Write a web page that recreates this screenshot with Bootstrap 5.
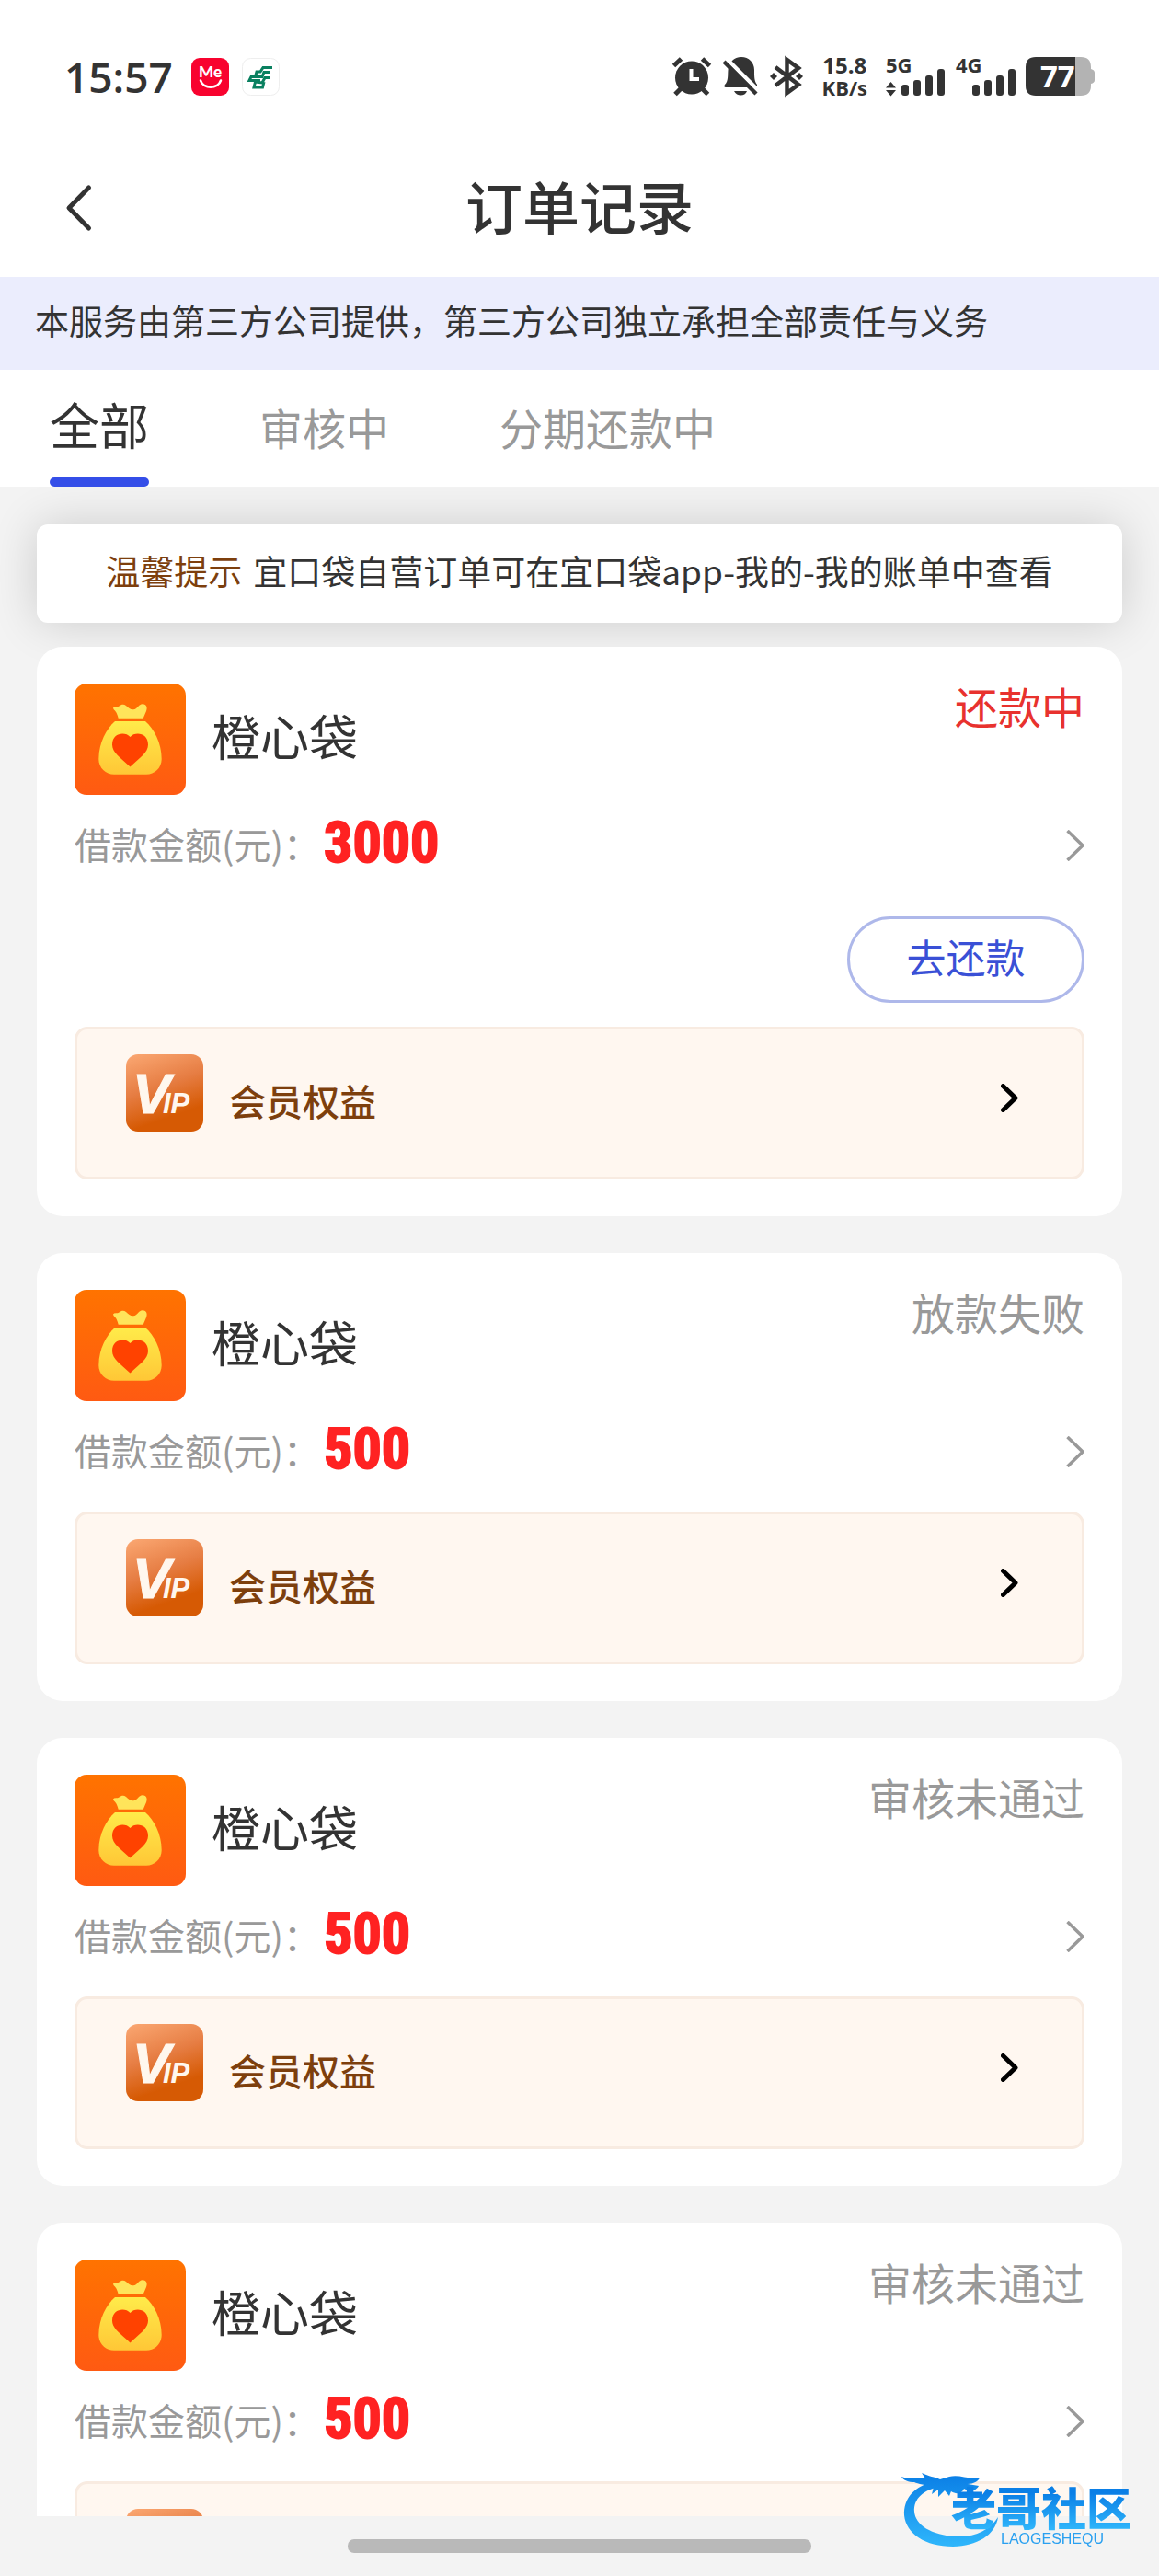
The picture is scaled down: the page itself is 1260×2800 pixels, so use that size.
<!DOCTYPE html>
<html lang="zh-CN">
<head>
<meta charset="utf-8">
<meta name="viewport" content="width=device-width, initial-scale=1">
<title>订单记录</title>
<link href="https://cdn.jsdelivr.net/npm/bootstrap@5.3.0/dist/css/bootstrap.min.css" rel="stylesheet">
<style>
  body { font-family: "Noto Sans CJK SC", sans-serif; background: #f3f3f3; color: #333; height: 100vh; overflow: hidden; }
  a { color: inherit; text-decoration: none; }
  svg { display: block; flex: none; overflow: visible; }
  .status-bar { height: 150px; padding: 16px 70px 0 70px; font-family: "Open Sans", sans-serif; }
  .clock { font-size: 46px; font-weight: 600; line-height: 48px; margin-right: 20px; }
  .app-icons { gap: 14px; }
  .net-speed { font-weight: 700; line-height: 24px; font-size: 24px; margin: 0 20px 0 21px; }
  .net-speed .unit { font-size: 22px; }
  .title-bar { height: 151px; padding: 0 68px; }
  .title-bar h1 { font-size: 62px; font-weight: 500; line-height: 72px; padding-bottom: 6px; }
  .side { width: 36px; }
  .notice { background: #ebedfd; height: 101px; padding: 0 38px; font-size: 37px; line-height: 94px; }
  .tabs { height: 127px; padding: 0 54px; gap: 120px; }
  .tab-item { border: 0; background: none; padding: 0 0 4px; color: #999; font-size: 47px; line-height: 118px; }
  .tab-item.active { color: #333; font-size: 54px; line-height: 117px; padding: 0; border-bottom: 10px solid transparent; position: relative; }
  .tab-item.active::after { content: ""; position: absolute; left: 0; right: 0; top: 117px; height: 10px; border-radius: 5px; background: #344ee8; }
  .scroll-area { padding: 41px 40px 0; overflow: hidden; min-height: 0; }
  .tip { border-radius: 12px; background: #fff; height: 107px; line-height: 101px; font-size: 37px; gap: 12px; margin-bottom: 26px; box-shadow: 0 0 50px rgba(0,0,0,.16); }
  .tip strong { font-weight: 400; color: #7d3f0d; }
  .order { background: #fff; border-radius: 28px; padding: 40px 41px; margin-bottom: 40px; position: relative; }
  .order-head { height: 121px; gap: 28px; }
  .order-head h2 { font-size: 53px; font-weight: 400; line-height: 113px; }
  .state { font-size: 47px; line-height: 48px; color: #999; }
  .state.due { color: #e8322e; }
  .amount { height: 110px; font-size: 40px; color: #999; }
  .amount .sum { font-family: "Roboto Condensed", "Liberation Sans Narrow", "Liberation Sans", sans-serif; font-weight: 700; font-size: 62px; line-height: 104px; height: 110px; color: #ff2222; -webkit-text-stroke: 2px #ff2222; margin-left: 4px; }
  .amount .label { line-height: 106px; height: 110px; }
  .actions { padding: 22px 0 16px; }
  .repay { width: 258px; height: 94px; border: 3px solid #aeb8ea; border-radius: 47px; background: #fff; color: #3a50d6; font-size: 43px; line-height: 80px; padding: 0 0 8px; }
  .vip { margin-top: 10px; height: 166px; border: 3px solid #f8ebe1; border-radius: 14px; background: #fff7f0; padding: 27px 69px 0 53px; color: #7d3f0d; }
  .vip span { font-size: 40px; font-weight: 500; line-height: 100px; margin-left: 28px; }
  .vip .go { margin-top: 32px; }
  .home-zone { height: 65px; flex: none; }
  .home-pill { width: 40%; height: 15px; border-radius: 7px; background: #b9b9b9; }
  .brand { position: fixed; right: 0; bottom: 20px; }
</style>
</head>
<body class="d-flex flex-column">

<svg width="0" height="0" class="position-absolute" aria-hidden="true">
  <defs>
    <linearGradient id="gOrange" x1="0" y1="0" x2="0" y2="1"><stop offset="0" stop-color="#ff7300"/><stop offset="1" stop-color="#ff5a12"/></linearGradient>
    <linearGradient id="gYellow" x1="0" y1="0" x2="0" y2="1"><stop offset="0" stop-color="#ffeb4a"/><stop offset="1" stop-color="#ffc736"/></linearGradient>
    <linearGradient id="gVip" x1="0" y1="0" x2=".35" y2="1"><stop offset="0" stop-color="#fba873"/><stop offset=".5" stop-color="#e67d43"/><stop offset=".9" stop-color="#d65a04"/></linearGradient>
    <linearGradient id="gBlue" gradientUnits="userSpaceOnUse" x1="0" y1="20" x2="0" y2="98"><stop offset="0" stop-color="#0b7fe6"/><stop offset="1" stop-color="#2fb6fb"/></linearGradient>
    <linearGradient id="gBlueText" gradientUnits="userSpaceOnUse" x1="0" y1="40" x2="0" y2="80"><stop offset="0" stop-color="#0b7fe6"/><stop offset="1" stop-color="#2fb6fb"/></linearGradient>
    <symbol id="bag" viewBox="0 0 121 121">
      <rect width="121" height="121" rx="13" fill="url(#gOrange)"/>
      <path d="M42 26.500C43.500 24.500 46 26 48.500 24.500C51 22.500 53.500 22 56 24C59 26.500 60.500 28.500 64 28.300C68.500 28 69.500 22.300 74 22.300C78.500 22.300 79.500 26.500 78 30L74.700 37.700H47.700C46.500 33 45 30 42.500 28Z" fill="#ffe45a"/>
      <path d="M44 41H77C86 49 94.700 64 94.700 82C94.700 92 87 98.700 78 98.700H43C34 98.700 26.300 92 26.300 82C26.300 64 35 49 44 41Z" fill="url(#gYellow)"/>
      <path d="M60.500 58C55 52 41 53.500 41 66.500C41 75 50 80.500 60.500 90.500C71 80.500 80 75 80 66.500C80 53.500 66 52 60.500 58Z" fill="#ff4200"/>
    </symbol>
    <symbol id="vipmark" viewBox="0 0 84 84">
      <rect width="84" height="84" rx="13" fill="url(#gVip)"/>
      <g fill="#fff7ee" font-family="Liberation Sans, sans-serif" font-weight="700" font-style="italic">
        <text x="7" y="64" font-size="62" stroke="#fff7ee" stroke-width="1">V</text>
        <text x="40" y="64" font-size="31">IP</text>
      </g>
    </symbol>
    <symbol id="arrow" viewBox="0 0 20 34"><path d="M1.500 1L18 17L1.500 33" fill="none" stroke="#999" stroke-width="3.500"/></symbol>
    <symbol id="arrowBold" viewBox="0 0 19 31"><path d="M2.500 2.500L16 15.500L2.500 28.500" fill="none" stroke="#000" stroke-width="5" stroke-linecap="round" stroke-linejoin="round"/></symbol>
    <symbol id="bars" viewBox="0 0 47 29"><g fill="#333"><rect y="17" width="8" height="12" rx="3"/><rect x="13" y="12" width="8" height="17" rx="3"/><rect x="26" y="7" width="8" height="22" rx="3"/><rect x="39" width="8" height="29" rx="3"/></g></symbol>
  </defs>
</svg>

<header class="bg-white flex-shrink-0">
  <div class="status-bar d-flex align-items-center justify-content-between">
    <div class="d-flex align-items-center">
      <span class="clock">15:57</span>
      <div class="app-icons d-flex">
        <svg width="41" height="41" viewBox="0 0 41 41"><rect width="41" height="41" rx="9" fill="#f8032f"/><text x="20.500" y="21" text-anchor="middle" font-family="Lato, sans-serif" font-weight="900" font-size="17" fill="#fff">Me</text><path d="M10 24.500C13 34 29 34 32 24.500" fill="none" stroke="#fff" stroke-width="2.500" stroke-linecap="round"/></svg>
        <svg width="41" height="41" viewBox="0 0 41 41"><rect x=".5" y=".5" width="40" height="40" rx="9" fill="#fff" stroke="#eee"/><g fill="none" stroke="#0a8060" stroke-width="3"><path d="M33 10.500H23L20 15H16L14.500 20.500"/><path d="M31 15.500H24L22 20.500H10L8 24.500H20"/><path d="M30 21.500H25L22 27L14 26M24 26L22.500 32H13L14.500 26"/></g></svg>
      </div>
    </div>
    <div class="d-flex align-items-center">
      <svg class="me-2" width="47" height="42" viewBox="0 0 47 42"><g stroke="#333" stroke-width="5" fill="none"><path d="M1.500 9.500L9.500 2M32.500 2L40.500 9.500M3 40.500L9.500 34M32 34L38.500 40.500"/></g><circle cx="21" cy="22.500" r="18" fill="#333"/><path d="M20.500 13V24H29" fill="none" stroke="#fff" stroke-width="4"/></svg>
      <svg width="39" height="42" viewBox="0 0 39 42"><path d="M20 0C28 0 34 6 34 14C34 22 34 26 37 30V33H3C1 33 1 31 2 30C6 26 5 20 5.500 14C6 6 12 0 20 0ZM12 37H26C24 43 15 43 12 37Z" fill="#333"/><path d="M4 2L40 38" stroke="#fff" stroke-width="4.500"/><path d="M1 5L36 40" stroke="#333" stroke-width="4.500"/></svg>
      <svg width="36" height="42" viewBox="0 0 36 42" style="margin-left:12px"><path d="M6 11L31 30L18.500 39V3L31 12L6 31" fill="none" stroke="#333" stroke-width="4.500"/><path d="M4 17L8 21L4 25L0 21ZM32 17L36 21L32 25L28 21Z" fill="#333"/></svg>
      <div class="net-speed text-center">15.8<br><span class="unit">KB/s</span></div>
      <svg width="64" height="42" viewBox="0 0 64 42"><text x="0" y="16.500" font-size="22" font-weight="700" fill="#333">5G</text><path d="M0 33.500L5.500 27L11 33.500ZM0 36L5.500 42.500L11 36Z" fill="#333"/><use href="#bars" x="17" y="13" width="47" height="29"/></svg>
      <svg width="65" height="42" viewBox="0 0 65 42" style="margin:0 11px 0 12px"><text x="0" y="16.500" font-size="22" font-weight="700" fill="#333">4G</text><use href="#bars" x="18" y="13" width="47" height="29"/></svg>
      <svg width="75" height="42" viewBox="0 0 75 42"><path d="M53 0H60Q71 0 71 11V13Q75 14 75 17V25Q75 28 71 29V31Q71 42 60 42H53Z" fill="#b3b3b3"/><path d="M11 0H54V42H11Q0 42 0 31V11Q0 0 11 0Z" fill="#333"/><text x="16" y="33" font-size="33" font-weight="700" fill="#fff">77</text></svg>
    </div>
  </div>
  <div class="title-bar d-flex align-items-center justify-content-between">
    <a href="#" class="side" aria-label="返回"><svg width="36" height="52" viewBox="0 0 36 52"><path d="M28.500 4L7 26L28.500 48" fill="none" stroke="#333" stroke-width="5" stroke-linecap="round" stroke-linejoin="round"/></svg></a>
    <h1 class="m-0">订单记录</h1>
    <span class="side"></span>
  </div>
</header>

<div class="notice flex-shrink-0">本服务由第三方公司提供，第三方公司独立承担全部责任与义务</div>

<nav class="tabs d-flex bg-white flex-shrink-0">
  <button type="button" class="tab-item active">全部</button>
  <button type="button" class="tab-item">审核中</button>
  <button type="button" class="tab-item">分期还款中</button>
</nav>

<main class="scroll-area flex-grow-1">
  <div class="tip d-flex justify-content-center"><strong>温馨提示</strong><span>宜口袋自营订单可在宜口袋app-我的-我的账单中查看</span></div>

  <section class="order">
    <div class="order-head d-flex">
      <svg width="121" height="121"><use href="#bag"/></svg>
      <h2 class="m-0">橙心袋</h2>
      <span class="state due ms-auto">还款中</span>
    </div>
    <a href="#" class="amount d-flex align-items-center"><span class="label">借款金额(元)：</span><span class="sum">3000</span><svg class="ms-auto" width="20" height="34"><use href="#arrow"/></svg></a>
    <div class="actions d-flex justify-content-end"><button type="button" class="repay">去还款</button></div>
    <a href="#" class="vip d-flex align-items-start"><svg width="84" height="84"><use href="#vipmark"/></svg><span>会员权益</span><svg class="go ms-auto" width="19" height="31"><use href="#arrowBold"/></svg></a>
  </section>

  <section class="order">
    <div class="order-head d-flex">
      <svg width="121" height="121"><use href="#bag"/></svg>
      <h2 class="m-0">橙心袋</h2>
      <span class="state ms-auto">放款失败</span>
    </div>
    <a href="#" class="amount d-flex align-items-center"><span class="label">借款金额(元)：</span><span class="sum">500</span><svg class="ms-auto" width="20" height="34"><use href="#arrow"/></svg></a>
    <a href="#" class="vip d-flex align-items-start"><svg width="84" height="84"><use href="#vipmark"/></svg><span>会员权益</span><svg class="go ms-auto" width="19" height="31"><use href="#arrowBold"/></svg></a>
  </section>

  <section class="order">
    <div class="order-head d-flex">
      <svg width="121" height="121"><use href="#bag"/></svg>
      <h2 class="m-0">橙心袋</h2>
      <span class="state ms-auto">审核未通过</span>
    </div>
    <a href="#" class="amount d-flex align-items-center"><span class="label">借款金额(元)：</span><span class="sum">500</span><svg class="ms-auto" width="20" height="34"><use href="#arrow"/></svg></a>
    <a href="#" class="vip d-flex align-items-start"><svg width="84" height="84"><use href="#vipmark"/></svg><span>会员权益</span><svg class="go ms-auto" width="19" height="31"><use href="#arrowBold"/></svg></a>
  </section>

  <section class="order">
    <div class="order-head d-flex">
      <svg width="121" height="121"><use href="#bag"/></svg>
      <h2 class="m-0">橙心袋</h2>
      <span class="state ms-auto">审核未通过</span>
    </div>
    <a href="#" class="amount d-flex align-items-center"><span class="label">借款金额(元)：</span><span class="sum">500</span><svg class="ms-auto" width="20" height="34"><use href="#arrow"/></svg></a>
    <a href="#" class="vip d-flex align-items-start"><svg width="84" height="84"><use href="#vipmark"/></svg><span>会员权益</span><svg class="go ms-auto" width="19" height="31"><use href="#arrowBold"/></svg></a>
  </section>
</main>

<footer class="home-zone d-flex align-items-center justify-content-center"><div class="home-pill"></div></footer>

<svg class="brand" width="300" height="110" viewBox="0 0 300 110">
  <path d="M58 27C34 31 22 46 23 64C25 84 46 98 76 98C102 97 122 86 125 66C116 80 100 88 80 87C52 86 35 74 34 60C33 46 44 36 62 33Z" fill="url(#gBlue)"/>
  <path d="M20 22C28 25 36 22 46 24L42 18C50 22 56 22 62 25L72 22C82 19 92 25 105 23C104 27 98 30 92 30L104 32C102 36 96 40 88 35C86 40 80 42 74 38L72 43L67 37L60 44L60 36L53 41L55 33C46 31 38 30 34 28C28 28 22 26 20 22Z" fill="url(#gBlue)"/>
  <text x="74" y="75" font-family="Noto Sans CJK SC, sans-serif" font-weight="900" font-size="49" fill="url(#gBlueText)">老哥社区</text>
  <text x="128" y="95" font-family="Liberation Sans, sans-serif" font-size="16" fill="#2aa0f0">LAOGESHEQU</text>
</svg>

<script src="https://cdn.jsdelivr.net/npm/bootstrap@5.3.0/dist/js/bootstrap.bundle.min.js"></script>
</body>
</html>
